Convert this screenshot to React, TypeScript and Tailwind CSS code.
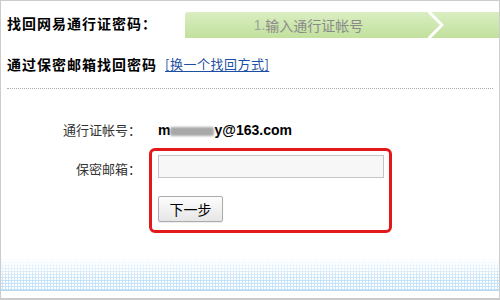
export default function App() {
  const cjk = "font-['Noto_Sans_CJK_SC','Noto_Sans',sans-serif]";
  return (
    <div className={`w-[500px] h-[300px] border border-b-2 border-[#cccccc] bg-white flex flex-col ${cjk} text-[#222]`}>
      {/* header */}
      <div className="flex items-center pt-[11px] h-[37px]">
        <div className="w-[184px] pl-[6px] text-[14px] font-bold leading-[20px] tracking-[1px] text-black -mt-[4px]">找回网易通行证密码：</div>
        <div className="flex-1 h-[26px] flex rounded-tl-[3px] bg-gradient-to-b from-[#daeec2] to-[#c1e19c]">
          <div className="w-[243px] flex items-center justify-center pl-[4px] text-[14px] text-[#8a8a8a] leading-[26px]">
            <span className="font-['Liberation_Sans',sans-serif] text-[#9aa59a]">1.</span>输入通行证帐号
          </div>
          <svg width="16" height="26" viewBox="0 0 16 26" className="shrink-0">
            <polyline points="0,-1 14,13 0,27" fill="none" stroke="#ffffff" strokeWidth="3" />
          </svg>
          <div className="flex-1" />
        </div>
      </div>

      {/* subtitle */}
      <div className="flex items-center mt-[16px] pl-[6px] h-[20px] leading-[20px]">
        <span className="text-[14px] font-bold tracking-[1px] text-black">通过保密邮箱找回密码</span>
        <a href="#" className="ml-[8px] text-[13px] tracking-[0.5px] text-[#1d4fa3] underline underline-offset-2">[换一个找回方式]</a>
      </div>

      {/* dotted separator */}
      <div className="mt-[14px] mx-[6px] border-t border-dotted border-[#aaaaaa]" />

      {/* account row */}
      <div className="flex items-center mt-[31px] h-[20px]">
        <div className="w-[140px] text-right text-[13px] text-[#333] leading-[20px]">通行证帐号：</div>
        <div className="ml-[17px] flex items-center font-['Liberation_Sans',sans-serif] font-bold text-[14px] text-black leading-[20px]">
          <span>m</span>
          <span className="inline-block w-[44px] h-[9px] mt-[3px] bg-[#a8a8a8] blur-[1px] rounded-[2px]" />
          <span>y@163.com</span>
        </div>
      </div>

      {/* email row */}
      <div className="flex items-start mt-[8px]">
        <div className="w-[140px] text-right text-[13px] text-[#333] leading-[20px] mt-[11px]">保密邮箱：</div>
        <div className="ml-[8px] w-[243px] h-[85px] border-[3px] border-[#e2191b] rounded-[6px] pl-[6px] pt-[4px]">
          <input
            className="block w-[226px] h-[23px] border border-[#c4c4c4] bg-[#f7f7f7] outline-none"
            type="text"
          />
          <button className="mt-[18px] w-[65px] h-[26px] border border-[#ababab] rounded-[2px] bg-gradient-to-b from-[#fdfdfd] to-[#e6e6e6] text-[14px] text-black leading-[24px] shadow-[0_1px_1px_rgba(0,0,0,0.08)]">
            下一步
          </button>
        </div>
      </div>

      {/* bottom decoration */}
      <div className="mt-auto">
        <div className="h-[32px] bg-[radial-gradient(circle,#c4e2f8_1px,transparent_1.2px)] bg-[length:3px_3px] [mask-image:linear-gradient(to_bottom,transparent,black_70%)]" />
        <div className="h-[1px] bg-[#b9d5ea]" />
        <div className="h-[7px] bg-white" />
      </div>
    </div>
  );
}
